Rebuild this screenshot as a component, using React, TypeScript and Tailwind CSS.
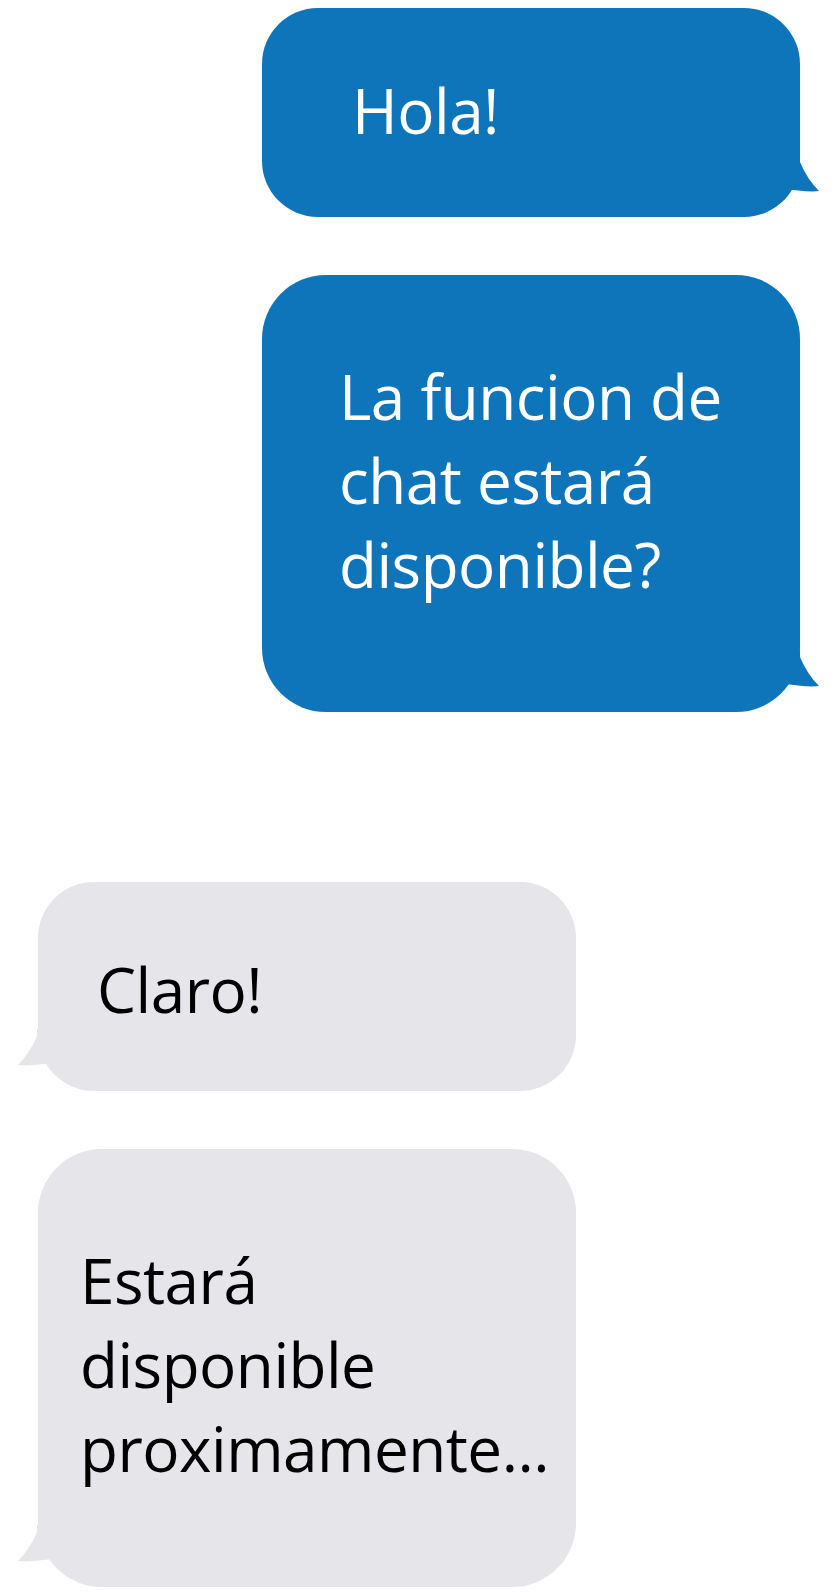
import React from 'react';

type Side = 'me' | 'them';

const Tail: React.FC<{ side: Side }> = ({ side }) =>
  side === 'me' ? (
    <svg className="absolute bottom-[22px] right-[-19px] h-[40px] w-[40px]" viewBox="0 0 40 40">
      <path d="M0 0 H21 V7 Q28 24 40 36 Q28 37.5 1 33 Z" fill="#0e75ba" />
    </svg>
  ) : (
    <svg className="absolute bottom-[22px] left-[-20px] h-[40px] w-[40px]" viewBox="0 0 40 40">
      <path d="M40 0 H19 V7 Q12 24 0 36 Q12 37.5 39 33 Z" fill="#e5e5ea" />
    </svg>
  );

const Bubble: React.FC<{ side: Side; className?: string; children: React.ReactNode }> = ({
  side,
  className = '',
  children,
}) => (
  <div
    className={`relative flex w-[538px] items-center text-[62px] leading-[84px] tracking-[-0.5px] ${
      side === 'me' ? 'ml-[262px] bg-[#0e75ba] text-white' : 'ml-[38px] bg-[#e5e5ea] text-black'
    } ${className}`}
  >
    <div>{children}</div>
    <Tail side={side} />
  </div>
);

export default function App() {
  return (
    <div className="min-h-[1594px] w-[833px] bg-white pt-[8px] font-['Open_Sans','Noto_Sans',sans-serif]">
      <Bubble side="me" className="h-[209px] rounded-[56px] pb-[6px] pl-[90px]">
        Hola!
      </Bubble>

      <Bubble side="me" className="mt-[58px] h-[437px] rounded-[64px] pb-[28px] pl-[77px]">
        La funcion de
        <br />
        chat estará
        <br />
        disponible?
      </Bubble>

      <Bubble side="them" className="mt-[170px] h-[209px] rounded-[56px] pl-[59px] pt-[4px]">
        Claro!
      </Bubble>

      <Bubble side="them" className="mt-[58px] h-[438px] rounded-[64px] pb-[8px] pl-[42px]">
        Estará
        <br />
        disponible
        <br />
        proximamente...
      </Bubble>
    </div>
  );
}
